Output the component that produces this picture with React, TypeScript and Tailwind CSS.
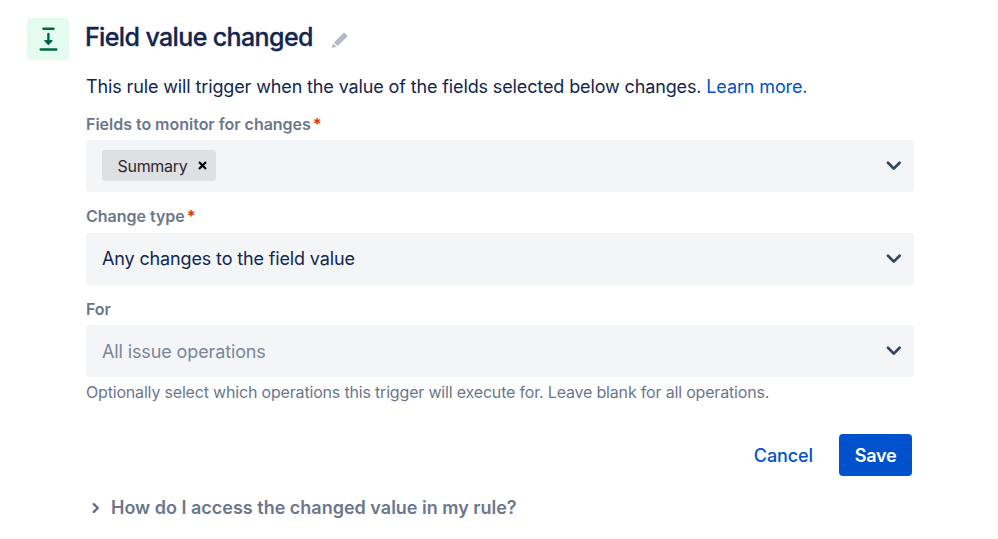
const Chevron = () => (
  <svg className="mr-[12px] shrink-0" width="16" height="12" viewBox="0 0 16 12" fill="none" stroke="#344563" strokeWidth="2.7" strokeLinecap="round" strokeLinejoin="round">
    <path d="M2 2.800l5.800 5.800 5.800-5.800" />
  </svg>
);

const Label = ({ text, required }: { text: string; required?: boolean }) => (
  <div className="flex h-5 items-center whitespace-nowrap text-[16px] leading-5 font-semibold tracking-[-0.020px] text-[#6b778c]">
    {text}
    {required && <span className="ml-[2px] font-bold text-[#de350b]">*</span>}
  </div>
);

export default function App() {
  return (
    <div className="h-[539px] w-[998px] overflow-hidden bg-white pt-[18px] pl-[27px] font-['Inter',sans-serif] text-[#12264f]">
      <header className="flex h-[42px]">
        <div className="flex size-[42px] items-center justify-center rounded-[4px] bg-[#e3fcef]">
          <svg width="20" height="26" viewBox="0 0 20 26" fill="none" stroke="#006644" strokeWidth="2.4" strokeLinecap="round" strokeLinejoin="round">
            <path d="M5.500 2.800h10M2.700 23.500h15.600M10.400 8v7" />
            <path d="M7 14.800h6.800l-3.400 3.400z" fill="#006644" strokeWidth="1.600" />
          </svg>
        </div>
        <h1 className="ml-4 whitespace-nowrap text-[25px] leading-[38px] font-medium tracking-[-0.62px] [-webkit-text-stroke:0.300px_#12264f]">Field value changed</h1>
        <svg className="mt-[13px] ml-[18px]" width="18" height="18" viewBox="0 0 18 18" fill="#b3bac5">
          <path d="M.800 17l1.300-4.700 3.400 3.400zM3 11.400L12.400 2a1 1 0 0 1 1.400 0L16.200 4.400a1 1 0 0 1 0 1.400L6.600 15z" />
        </svg>
      </header>
      <main className="ml-[59px] w-[828px]">
        <p className="mt-[15px] whitespace-nowrap text-[18px] leading-6 tracking-[-0.128px]">
          This rule will trigger when the value of the fields selected below changes. <a className="text-[#0052cc]">Learn more.</a>
        </p>
        <div className="mt-[15px]"><Label text="Fields to monitor for changes" required /></div>
        <div className="mt-[6px] flex h-[52px] items-center justify-between rounded-[4px] bg-[#f4f5f7] pl-4">
          <span className="mb-px flex h-[31px] w-[114px] items-center rounded-[3px] bg-[#dfe0e4] pl-[15.500px] text-[16px] tracking-[-0.300px] text-[#292a2e]">
            Summary
            <svg className="ml-[10.500px]" width="9" height="9" viewBox="0 0 9 9" stroke="#000" strokeWidth="2.100"><path d="M1 1l7 7M8 1L1 8" /></svg>
          </span>
          <Chevron />
        </div>
        <div className="mt-[14px]"><Label text="Change type" required /></div>
        <div className="mt-[6.500px] flex h-[52px] items-center justify-between rounded-[4px] bg-[#f4f5f7] pl-4 text-[18px] tracking-[-0.140px]"><span className="-mt-px">Any changes to the field value</span><Chevron /></div>
        <div className="mt-[14.500px]"><Label text="For" /></div>
        <div className="mt-[6px] flex h-[52px] items-center justify-between rounded-[4px] bg-[#f4f5f7] pl-4 text-[18px] tracking-[-0.120px] text-[#7a869a]">All issue operations<Chevron /></div>
        <p className="mt-[5px] whitespace-nowrap text-[16px] leading-5 tracking-[-0.180px] text-[#6b778c]">Optionally select which operations this trigger will execute for. Leave blank for all operations.</p>
        <div className="mt-[32px] flex justify-end pr-[2px] text-[18px] font-medium">
          <button className="mr-[26px] tracking-[-0.100px] text-[#0052cc]">Cancel</button>
          <button className="h-[42px] w-[73px] rounded-[4px] bg-[#0052cc] font-semibold tracking-[-0.250px] text-white">Save</button>
        </div>
        <div className="mt-[20px] flex items-center text-[18px] leading-6 font-semibold text-[#6b778c]">
          <svg className="mr-[11px] ml-[6px]" width="8" height="12" viewBox="0 0 8 12" fill="none" stroke="#5e6c84" strokeWidth="2.4" strokeLinecap="round" strokeLinejoin="round"><path d="M1.800 2.200l4 3.800-4 3.800" /></svg>
          How do I access the changed value in my rule?
        </div>
      </main>
    </div>
  );
}
